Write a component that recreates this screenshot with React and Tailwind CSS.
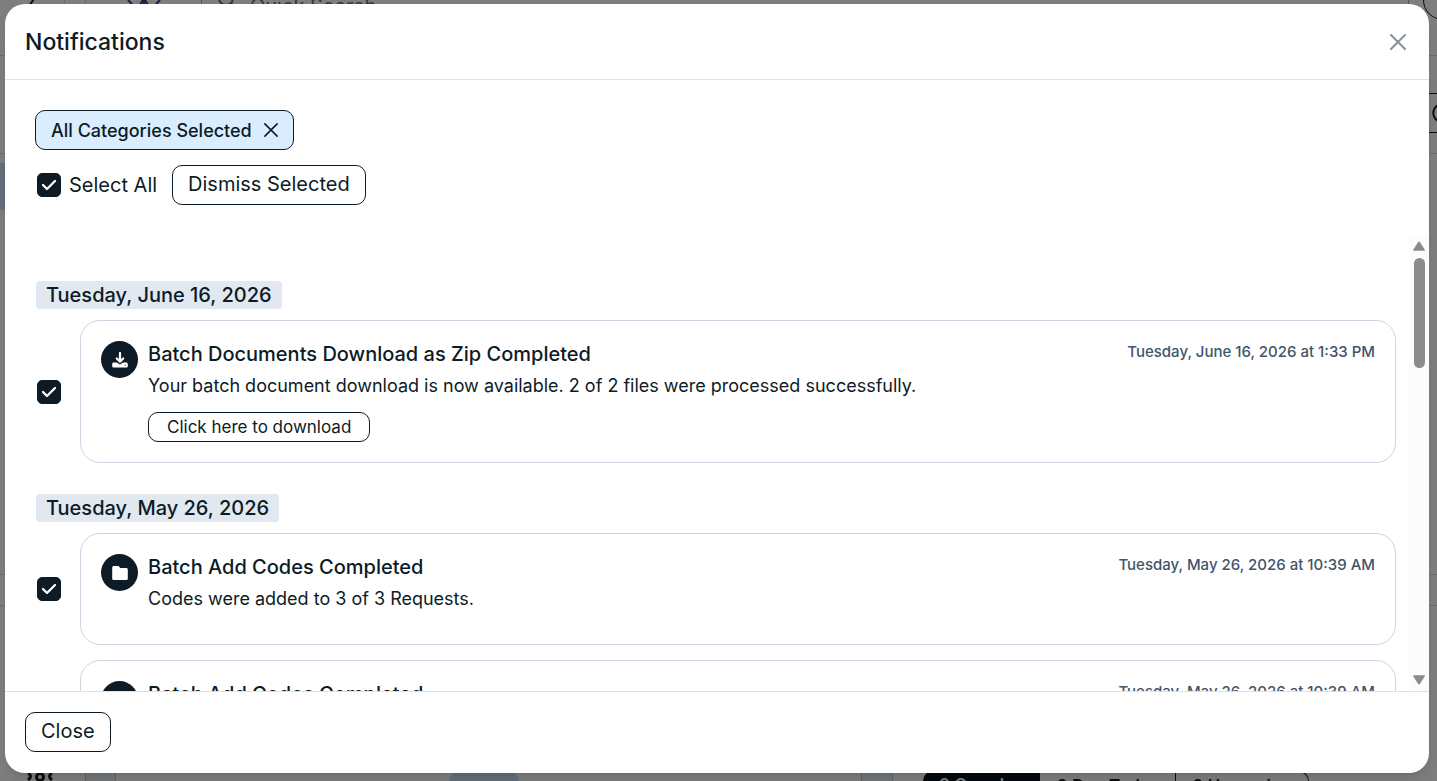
import { useState } from "react"

const groups = [
  {
    date: "Tuesday, June 16, 2026",
    items: [
      {
        id: 1,
        icon: "download",
        title: "Batch Documents Download as Zip Completed",
        message: "Your batch document download is now available. 2 of 2 files were processed successfully.",
        time: "Tuesday, June 16, 2026 at 1:33 PM",
        action: "Click here to download",
      },
    ],
  },
  {
    date: "Tuesday, May 26, 2026",
    items: [
      {
        id: 2,
        icon: "folder",
        title: "Batch Add Codes Completed",
        message: "Codes were added to 3 of 3 Requests.",
        time: "Tuesday, May 26, 2026 at 10:39 AM",
      },
      {
        id: 3,
        icon: "folder",
        title: "Batch Add Codes Completed",
        message: "Codes were added to 3 of 3 Requests.",
        time: "Tuesday, May 26, 2026 at 10:39 AM",
      },
    ],
  },
]

const allIds = groups.flatMap((group) => group.items.map((item) => item.id))

function Checkbox({ id, label, checked, onChange }) {
  return (
    <span className="grid size-6 shrink-0">
      <input
        id={id}
        type="checkbox"
        aria-label={label}
        checked={checked}
        onChange={onChange}
        className="col-start-1 row-start-1 size-6 appearance-none rounded-[5px] border border-[#0d1b26] bg-white checked:bg-[#0d1b26]"
      />
      {checked && (
        <svg viewBox="0 0 24 24" className="pointer-events-none col-start-1 row-start-1 size-6" fill="none">
          <path d="m6 12 4 4 8-8" stroke="white" strokeWidth="2.3" strokeLinecap="round" strokeLinejoin="round" />
        </svg>
      )}
    </span>
  )
}

function CloseIcon({ className }) {
  return (
    <svg viewBox="0 0 16 16" className={className} fill="none" stroke="currentColor" strokeLinecap="round">
      <path d="M1 1l14 14M15 1L1 15" />
    </svg>
  )
}

function ItemIcon({ name }) {
  return (
    <span className="flex size-[37px] shrink-0 items-center justify-center rounded-full bg-[#0d1b26]">
      {name === "download" ? (
        <svg viewBox="0 0 16 16" className="size-4">
          <path
            d="M8 1v7.5M4.8 6.5 8 9.7l3.2-3.2"
            fill="none"
            stroke="white"
            strokeWidth="2.2"
            strokeLinecap="round"
            strokeLinejoin="round"
          />
          <path d="M1.8 10.6h3L8 12.6l3.2-2h3c.9 0 1.6.7 1.6 1.6V14c0 .9-.7 1.6-1.6 1.6H1.8C.9 15.6.2 14.9.2 14v-1.8c0-.9.7-1.6 1.6-1.6Z" fill="white" />
          <circle cx="13.2" cy="13.1" r=".6" fill="#0d1b26" />
        </svg>
      ) : (
        <svg viewBox="0 0 16 16" className="size-4">
          <path d="M1.8 1h4.6l2 2h5.8c.9 0 1.6.7 1.6 1.6v8.8c0 .9-.7 1.6-1.6 1.6H1.8c-.9 0-1.6-.7-1.6-1.6V2.6C.2 1.7.9 1 1.8 1Z" fill="white" />
        </svg>
      )}
    </span>
  )
}

function NotificationCard({ item, checked, onToggle }) {
  return (
    <li className="flex items-center gap-[19px]">
      <Checkbox id={`item-${item.id}`} label={item.title} checked={checked} onChange={onToggle} />
      <article className="flex min-h-28 flex-1 items-start gap-[10px] rounded-[20px] border border-[#cbd5e1] p-5">
        <ItemIcon name={item.icon} />
        <div className="flex-1">
          <h3 className="text-[20px] leading-[26px] font-medium">{item.title}</h3>
          <p className="mt-[5px] text-[18px] leading-7">{item.message}</p>
          {item.action && (
            <button className="mt-3 block h-[30px] rounded-[10px] border border-[#0d1b26] px-[18px] text-[17px] leading-7">
              {item.action}
            </button>
          )}
        </div>
        <time className="text-[15px] leading-[22px] font-medium text-[#42546a]">{item.time}</time>
      </article>
    </li>
  )
}

function ScrollTrack() {
  return (
    <div className="flex w-5 shrink-0 flex-col items-center justify-between bg-[#fcfcfc] py-[6px]">
      <div className="flex flex-col items-center gap-[7px]">
        <svg viewBox="0 0 12 10" className="h-[10px] w-3">
          <path d="M6 1.3 11 9H1Z" fill="#8b8b8b" stroke="#8b8b8b" strokeWidth="1.6" strokeLinejoin="round" />
        </svg>
        <div className="h-[110px] w-[11px] rounded-full bg-[#8b8b8b]" />
      </div>
      <svg viewBox="0 0 12 10" className="h-[10px] w-3">
        <path d="M6 8.7 11 1H1Z" fill="#8b8b8b" stroke="#8b8b8b" strokeWidth="1.6" strokeLinejoin="round" />
      </svg>
    </div>
  )
}

// App page behind the dialog, only its edges are visible
function PageBehind() {
  return (
    <div aria-hidden="true" className="flex h-full flex-col overflow-hidden bg-[#7e7e7e] text-[#0a0e13]">
      <div className="flex h-14 shrink-0 justify-between border-b border-[#686c71]">
        <div className="-mt-5 flex h-10 items-center">
          <svg viewBox="0 0 16 40" className="ml-6 h-10 w-4" fill="none" stroke="#05090f" strokeWidth="2">
            <path d="M12 16 5 26" />
          </svg>
          <span className="ml-6 h-10 border-l border-[#686c71]" />
          <span className="ml-5 h-10 border-l border-[#686c71]" />
          <svg viewBox="0 0 36 40" className="ml-10 h-10 w-9" fill="none" stroke="#17223d" strokeWidth="2">
            <path d="M2 20l4 4M14 25l4-7 4 7M30 24l4-4" />
            <path d="M18 19v5" strokeWidth="3" />
          </svg>
          <div className="ml-[39px] flex h-11 items-center gap-3 rounded-[10px] border-l border-[#4d5560] pl-4 text-[20px] text-[#30373f]">
            <svg viewBox="0 0 20 20" className="size-5" fill="none" stroke="currentColor" strokeWidth="2">
              <circle cx="8" cy="8" r="7" />
              <path d="m13 13 6 6" />
            </svg>
            <span className="pt-3">Quick Search</span>
          </div>
        </div>
        <div className="-mr-[26px] flex h-5 items-end">
          <span className="mr-[14px] h-5 border-l border-[#4d5560]" />
          <span className="-mt-5 size-10 rounded-full border border-[#0a0e13]" />
        </div>
      </div>
      <div className="flex h-[98px] shrink-0 items-center justify-end border-b border-[#686c71]">
        <span className="-mr-6 mt-4 flex h-10 w-12 items-center border-y border-[#0a0e13] pl-4">
          <svg viewBox="0 0 20 20" className="size-5 shrink-0" fill="none" stroke="#0a0e13" strokeWidth="2">
            <path d="M18 2H9a8 8 0 1 0 9 16" />
          </svg>
        </span>
      </div>
      <div className="mt-[9px] h-[47px] w-20 shrink-0 bg-[#64707b]" />
      <div className="mt-auto flex h-[207px] shrink-0 flex-col border-t border-[#686c71]">
        <div className="mt-[30px] flex flex-1 items-end justify-between border-t border-[#686c71]">
          <div className="flex h-[10px] items-start">
            <svg viewBox="0 0 26 10" className="ml-[27px] h-[10px] w-[26px]" fill="none" stroke="#0a0e13" strokeWidth="3">
              <path d="M1 2q5 3 0 7M25 2q-5 3 0 7" />
              <circle cx="13" cy="6" r="3.5" />
            </svg>
            <span className="ml-8 h-[10px] w-[31px] border-x border-[#5e656d] bg-[#74777a]" />
            <span className="ml-[333px] h-[10px] w-[70px] rounded-t-[10px] bg-[#64707b]" />
          </div>
          <div className="mr-[128px] flex h-[10px] items-start overflow-hidden text-[17px] leading-7 font-semibold">
            <span className="mr-[30px] h-[10px] w-8 border-x border-[#5e656d] bg-[#74777a]" />
            <span className="h-10 rounded-tl-[10px] bg-[#05090d] px-4 text-[#7e7e7e]">0 Overdue</span>
            <span className="h-10 border-t border-[#0a0e13] px-4">0 Due Today</span>
            <span className="h-10 rounded-tr-[10px] border-x border-t border-[#0a0e13] px-4">0 Upcoming</span>
          </div>
        </div>
      </div>
    </div>
  )
}

function App() {
  const [selected, setSelected] = useState(allIds)

  const toggle = (id) => {
    setSelected(selected.includes(id) ? selected.filter((s) => s !== id) : [...selected, id])
  }

  const allSelected = selected.length === allIds.length

  return (
    <div className="relative h-screen overflow-hidden font-['Inter',sans-serif] text-[#0d1b26]">
      <PageBehind />

      <div
        role="dialog"
        aria-labelledby="dialog-title"
        className="absolute inset-x-0 top-1 bottom-2 mr-2 ml-[5px] flex flex-col overflow-hidden rounded-[20px] bg-white shadow-lg"
      >
        <header className="flex h-[76px] shrink-0 items-center justify-between border-b border-[#dee2e6] px-5">
          <h2 id="dialog-title" className="text-[23px] leading-8 font-medium">
            Notifications
          </h2>
          <button aria-label="Close dialog" className="p-[3px] text-[#86919b]">
            <CloseIcon className="size-4 stroke-2" />
          </button>
        </header>

        <div className="flex min-h-0 flex-1 flex-col pt-[30px]">
          <div className="flex flex-col items-start gap-[15px] pl-[30px]">
            <button className="flex h-10 items-center gap-3 rounded-[10px] border border-[#0d1b26] bg-[#d9edff] px-[15px] text-[18px] font-medium">
              All Categories Selected
              <CloseIcon className="size-[14px] stroke-[1.8]" />
            </button>
            <div className="flex items-center">
              <label htmlFor="select-all" className="flex items-center gap-2 pl-[2px] text-[20px]">
                <Checkbox
                  id="select-all"
                  checked={allSelected}
                  onChange={() => setSelected(allSelected ? [] : allIds)}
                />
                Select All
              </label>
              <button className="ml-[15px] h-10 rounded-[10px] border border-[#0d1b26] px-[15px] pb-[2px] text-[20px]">
                Dismiss Selected
              </button>
            </div>
          </div>

          <div className="mt-[30px] flex min-h-0 flex-1">
            <div className="min-w-0 flex-1 overflow-hidden pt-[46px] pr-[13px] pl-[31px]">
              {groups.map((group) => (
                <section key={group.date} className="mb-[31px]">
                  <h3 className="inline-block rounded-[4px] bg-[#e2e8f0] px-[10px] align-top text-[20px] leading-7 font-medium">
                    {group.date}
                  </h3>
                  <ul className="mt-[11px] flex flex-col gap-[15px] pl-[1px]">
                    {group.items.map((item) => (
                      <NotificationCard
                        key={item.id}
                        item={item}
                        checked={selected.includes(item.id)}
                        onToggle={() => toggle(item.id)}
                      />
                    ))}
                  </ul>
                </section>
              ))}
            </div>
            <ScrollTrack />
          </div>
        </div>

        <footer className="flex h-[82px] shrink-0 items-start border-t border-[#dee2e6] px-5 pt-5">
          <button className="h-10 rounded-[10px] border border-[#0d1b26] px-[15px] pb-[2px] text-[20px]">Close</button>
        </footer>
      </div>
    </div>
  )
}

export default App
